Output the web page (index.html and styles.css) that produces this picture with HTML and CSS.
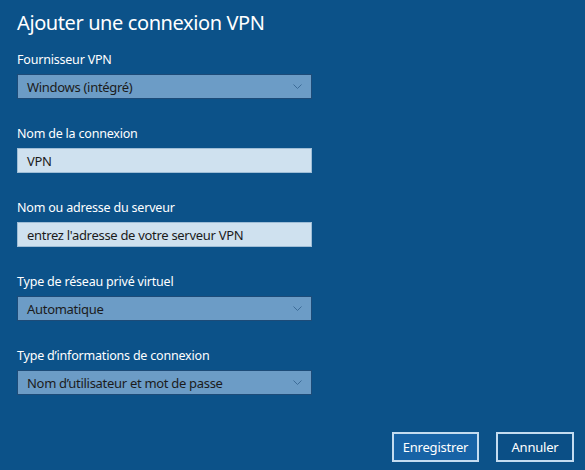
FILE: index.html
```html
<!DOCTYPE html>
<html lang="fr">
<head>
<meta charset="utf-8">
<title>Ajouter une connexion VPN</title>
<link rel="stylesheet" href="styles.css">
</head>
<body>
<div class="dialog">
  <h1 class="title">Ajouter une connexion VPN</h1>

  <div class="field">
    <div class="label">Fournisseur VPN</div>
    <div class="select"><span>Windows (intégré)</span>
      <svg class="chev" width="9" height="5" viewBox="0 0 9 5"><path d="M0.5 0.5 L4.5 4.5 L8.5 0.5" fill="none" stroke="#3d6c98" stroke-width="1"/></svg>
    </div>
  </div>

  <div class="field">
    <div class="label">Nom de la connexion</div>
    <div class="textbox">VPN</div>
  </div>

  <div class="field">
    <div class="label">Nom ou adresse du serveur</div>
    <div class="textbox">entrez l'adresse de votre serveur VPN</div>
  </div>

  <div class="field">
    <div class="label">Type de réseau privé virtuel</div>
    <div class="select"><span>Automatique</span>
      <svg class="chev" width="9" height="5" viewBox="0 0 9 5"><path d="M0.5 0.5 L4.5 4.5 L8.5 0.5" fill="none" stroke="#3d6c98" stroke-width="1"/></svg>
    </div>
  </div>

  <div class="field last">
    <div class="label">Type d’informations de connexion</div>
    <div class="select"><span>Nom d’utilisateur et mot de passe</span>
      <svg class="chev" width="9" height="5" viewBox="0 0 9 5"><path d="M0.5 0.5 L4.5 4.5 L8.5 0.5" fill="none" stroke="#3d6c98" stroke-width="1"/></svg>
    </div>
  </div>

  <div class="buttons">
    <button class="btn primary">Enregistrer</button>
    <button class="btn">Annuler</button>
  </div>
</div>
</body>
</html>
```
FILE: styles.css
```css
html, body {
  margin: 0;
  padding: 0;
  background: #0c5289;
}
body {
  width: 585px;
  height: 470px;
  overflow: hidden;
  font-family: "Noto Sans", "Liberation Sans", sans-serif;
  color: #ffffff;
}
.dialog {
  padding: 9px 11px 0 17px;
}
.title {
  margin: 0 0 15px 0;
  font-size: 20px;
  line-height: 28px;
  font-weight: 400;
  letter-spacing: -0.4px;
}
.field {
  margin-bottom: 27px;
  width: 295px;
}
.field.last {
  margin-bottom: 37px;
}
.label {
  font-size: 12.5px;
  line-height: 16px;
  margin-bottom: 6px;
  letter-spacing: -0.2px;
}
.select, .textbox {
  box-sizing: border-box;
  height: 25px;
  display: flex;
  align-items: center;
  padding: 0 9px 0 9px;
  font-size: 13px;
  letter-spacing: -0.3px;
  color: #1b1b1b;
}
.select {
  background: #6c9cc6;
  border: 1px solid #1d4b78;
  justify-content: space-between;
}
.textbox {
  background: #cfe1ef;
  border: 1px solid #9fbdd6;
}
.chev {
  display: block;
}
.buttons {
  display: flex;
  justify-content: flex-end;
  gap: 17px;
}
.btn {
  box-sizing: border-box;
  height: 30px;
  border: 2px solid #c4dcf0;
  color: #ffffff;
  font-family: "Noto Sans", "Liberation Sans", sans-serif;
  font-size: 13px;
  letter-spacing: -0.2px;
  padding: 0;
  margin: 0;
}
.btn.primary {
  width: 87px;
  background: #1763a6;
}
.btn:not(.primary) {
  width: 78px;
  background: #0b4f86;
}
```
